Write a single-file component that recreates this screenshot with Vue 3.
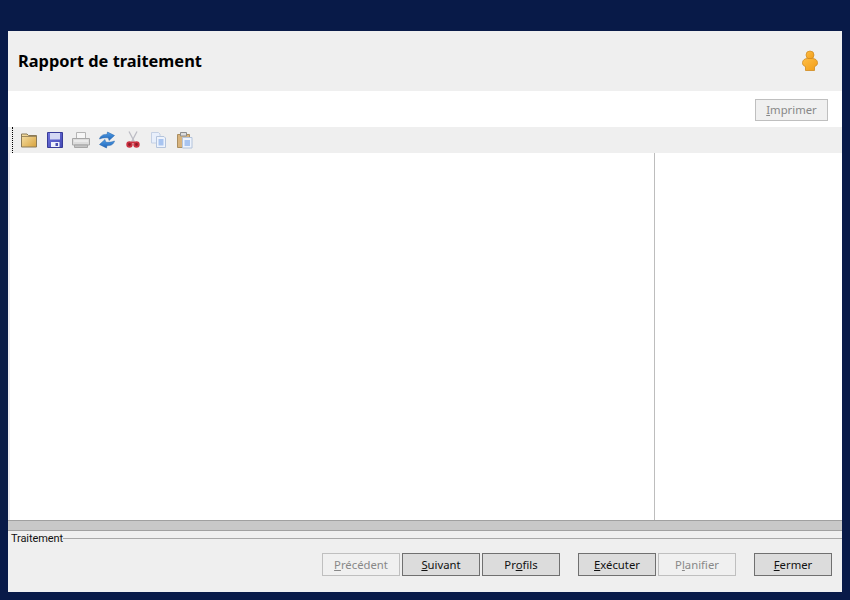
<script setup>
const leftButtons = [
  { pre: '', key: 'P', post: 'récédent', disabled: true },
  { pre: '', key: 'S', post: 'uivant' },
  { pre: 'Pr', key: 'o', post: 'fils' },
]
const midButtons = [
  { pre: '', key: 'E', post: 'xécuter' },
  { pre: 'P', key: 'l', post: 'anifier', disabled: true },
]
const endButtons = [{ pre: '', key: 'F', post: 'ermer' }]
const groups = [leftButtons, midButtons, endButtons]
</script>

<template>
  <div class="page">
    <div class="window">
      <header class="head">
        <h1>Rapport de traitement</h1>
        <svg class="user" width="18" height="22" viewBox="0 0 18 22">
          <defs>
            <linearGradient id="ug" x1="0" y1="0" x2="1" y2="1">
              <stop offset="0" stop-color="#ffbe45" />
              <stop offset="1" stop-color="#f19c16" />
            </linearGradient>
          </defs>
          <circle cx="9" cy="5" r="4" fill="url(#ug)" stroke="#cf8a20" stroke-width=".7" />
          <path d="M4.500 20.500V16.500C2.500 16 1.300 14.500 1.500 12.500 1.800 10 3.800 8.500 6.500 8.500H11.500C14.200 8.500 16.200 10 16.500 12.500 16.700 14.500 15.500 16 13.500 16.500V20.500Z" fill="url(#ug)" stroke="#cf8a20" stroke-width=".8" />
        </svg>
      </header>

      <div class="printrow">
        <button class="btn print" disabled><u>I</u>mprimer</button>
      </div>

      <div class="toolbar">
        <i class="grip"></i>
        <!-- dossier -->
        <svg width="18" height="18" viewBox="0 0 18 18">
          <defs>
            <linearGradient id="fg" x1="0" y1="0" x2="1" y2="1">
              <stop offset="0" stop-color="#f6e3ac" />
              <stop offset="1" stop-color="#d8a23c" />
            </linearGradient>
            <linearGradient id="dg" x1="0" y1="0" x2="1" y2="1">
              <stop offset="0" stop-color="#6d72dc" />
              <stop offset="1" stop-color="#4449b4" />
            </linearGradient>
            <linearGradient id="rg" x1="0" y1="0" x2="0" y2="1">
              <stop offset="0" stop-color="#4f9ee8" />
              <stop offset="1" stop-color="#1f64b8" />
            </linearGradient>
          </defs>
          <path d="M1.500 16V3H7L8.500 4.500H16.500V16Z" fill="url(#fg)" stroke="#8a7a58" />
          <path d="M2 5.500H16" stroke="#a08a5c" />
        </svg>
        <!-- disquette -->
        <svg width="18" height="18" viewBox="0 0 18 18">
          <path d="M1.500 1.500H16.500V16.500H1.500Z" fill="url(#dg)" stroke="#383c98" />
          <path d="M4 2H14V8.500H4Z" fill="#d5d9f4" />
          <path d="M5 11H13.500V16H5Z" fill="#eef0fb" />
          <path d="M9.500 12H12V15H9.500Z" fill="#4a4fb0" />
        </svg>
        <!-- imprimante -->
        <svg width="18" height="18" viewBox="0 0 18 18">
          <path d="M4.500 1.500H13.500V8H4.500Z" fill="#f6f6f6" stroke="#b4b4b4" />
          <path d="M.5 7.500H17.500V14H.5Z" fill="#dcdcdc" stroke="#a6a6a6" />
          <path d="M2.500 14H15.500V16.500H2.500Z" fill="#c4c4c4" stroke="#a6a6a6" />
          <path d="M2 10H16" stroke="#f8f8f8" />
        </svg>
        <!-- actualiser -->
        <svg width="18" height="18" viewBox="0 0 18 18">
          <path d="M1.500 8C2.500 4.500 5.500 3 9 3.500L9.500 1 16.500 4.500 11 9.500 10.500 7C7.500 6.300 4.500 6.800 1.500 8Z" fill="url(#rg)" stroke="#1f5ea8" stroke-width=".5" />
          <path d="M16.500 10C15.500 13.500 12.500 15 9 14.500L8.500 17 1.500 13.500 7 8.500 7.500 11C10.500 11.700 13.500 11.200 16.500 10Z" fill="url(#rg)" stroke="#1f5ea8" stroke-width=".5" />
        </svg>
        <!-- ciseaux -->
        <svg width="18" height="18" viewBox="0 0 18 18">
          <path d="M5 .5 10.500 11M13 .5 7.500 11" stroke="#bcbcc4" stroke-width="1.300" fill="none" />
          <circle cx="5.500" cy="13.500" r="2.300" fill="#8d1c2a" stroke="#cc3040" stroke-width="1.800" />
          <circle cx="12.500" cy="13.500" r="2.300" fill="#8d1c2a" stroke="#cc3040" stroke-width="1.800" />
          <path d="M7.500 10.500H10.500V12H7.500Z" fill="#cc3040" />
        </svg>
        <!-- copier -->
        <svg width="18" height="18" viewBox="0 0 18 18">
          <path d="M1.500 1.500H8.500L10 3V12H1.500Z" fill="#e8effb" stroke="#c4d0e4" />
          <path d="M6.500 5.500H14L15.500 7V16.500H6.500Z" fill="#eef3fc" stroke="#b4c4dc" />
          <path d="M8.500 8H13.500V14.500H8.500Z" fill="#a8c4f0" />
        </svg>
        <!-- coller -->
        <svg width="18" height="18" viewBox="0 0 18 18">
          <path d="M1.500 3.500H13.500V16.500H1.500Z" fill="#d8b47e" stroke="#ab8e60" />
          <path d="M4.500 1.500H10.500V5H4.500Z" fill="#dcdcdc" stroke="#8d8d8d" />
          <path d="M6.500 6.500H16V17H6.500Z" fill="#eef3fc" stroke="#b4c4dc" />
          <path d="M8.500 9H14V15H8.500Z" fill="#a8c4f0" />
        </svg>
      </div>

      <div class="content">
        <div class="main"></div>
        <div class="side"></div>
      </div>

      <div class="splitter"></div>

      <footer class="foot">
        <div class="legend"><span>Traitement</span><i></i></div>
        <div class="actions">
          <div v-for="(g, i) in groups" :key="i" class="group">
            <button v-for="b in g" :key="b.post" class="btn" :disabled="b.disabled">{{ b.pre }}<u>{{ b.key }}</u>{{ b.post }}</button>
          </div>
        </div>
      </footer>
    </div>
  </div>
</template>

<style>
html, body { margin: 0; padding: 0; background: #081a48; }
</style>

<style scoped>
.page {
  width: 850px;
  height: 600px;
  box-sizing: border-box;
  padding: 31px 8px 8px;
  background: #081a48;
  font-family: "Noto Sans", "Open Sans", sans-serif;
  overflow: hidden;
}
.window {
  height: 561px;
  display: flex;
  flex-direction: column;
  background: #fff;
}
.head {
  height: 60px;
  flex: none;
  display: flex;
  align-items: center;
  justify-content: space-between;
  padding: 0 23px 0 10px;
  background: #efefef;
}
h1 {
  margin: 0;
  font-size: 16.400px;
  line-height: 20px;
  font-weight: 700;
  color: #000;
}
.user { display: block; }
.printrow {
  height: 36px;
  flex: none;
  display: flex;
  align-items: flex-start;
  justify-content: flex-end;
  padding: 8px 14px 0 0;
  box-sizing: border-box;
}
.toolbar {
  height: 26px;
  flex: none;
  display: flex;
  align-items: center;
  gap: 8px;
  padding-left: 4px;
  background: #efefef;
  position: relative;
}
.grip {
  position: absolute;
  left: 4px;
  top: 0;
  height: 26px;
  width: 0;
  border-left: 1px dotted #000;
}
.toolbar svg { display: block; flex: none; }
.toolbar svg:first-of-type { margin-left: 8px; }
.content {
  flex: 1;
  min-height: 0;
  display: flex;
  border-left: 2px solid #ecebf2;
}
.main { width: 644px; flex: none; border-right: 1px solid #bdbdbd; }
.side { flex: 1; }
.splitter {
  height: 9px;
  flex: none;
  background: #c8c8c8;
  border-top: 1px solid #a0a0a0;
  border-bottom: 1px solid #a0a0a0;
}
.foot {
  height: 61px;
  flex: none;
  background: #efefef;
  display: flex;
  flex-direction: column;
}
.legend {
  display: flex;
  align-items: center;
  height: 14px;
  margin-top: 1px;
  padding-left: 3px;
  font-family: Roboto, "Noto Sans", sans-serif;
  font-size: 11px;
  letter-spacing: -0.1px;
  line-height: 14px;
  color: #111;
}
.legend i {
  flex: 1;
  height: 1px;
  background: #a8a8a8;
  margin-top: -1px;
}
.actions {
  display: flex;
  justify-content: flex-end;
  gap: 18px;
  padding: 7px 10px 0 0;
}
.group { display: flex; gap: 2px; }
.btn {
  width: 78px;
  height: 23px;
  padding: 0;
  box-sizing: border-box;
  border: 1px solid #707070;
  background: #dcdcdc;
  color: #111;
  font-family: inherit;
  font-size: 11.300px;
  line-height: 20px;
}
.btn:disabled {
  border-color: #bfbfbf;
  background: #f0f0f0;
  color: #888;
}
.print { width: 73px; height: 22px; }
</style>
